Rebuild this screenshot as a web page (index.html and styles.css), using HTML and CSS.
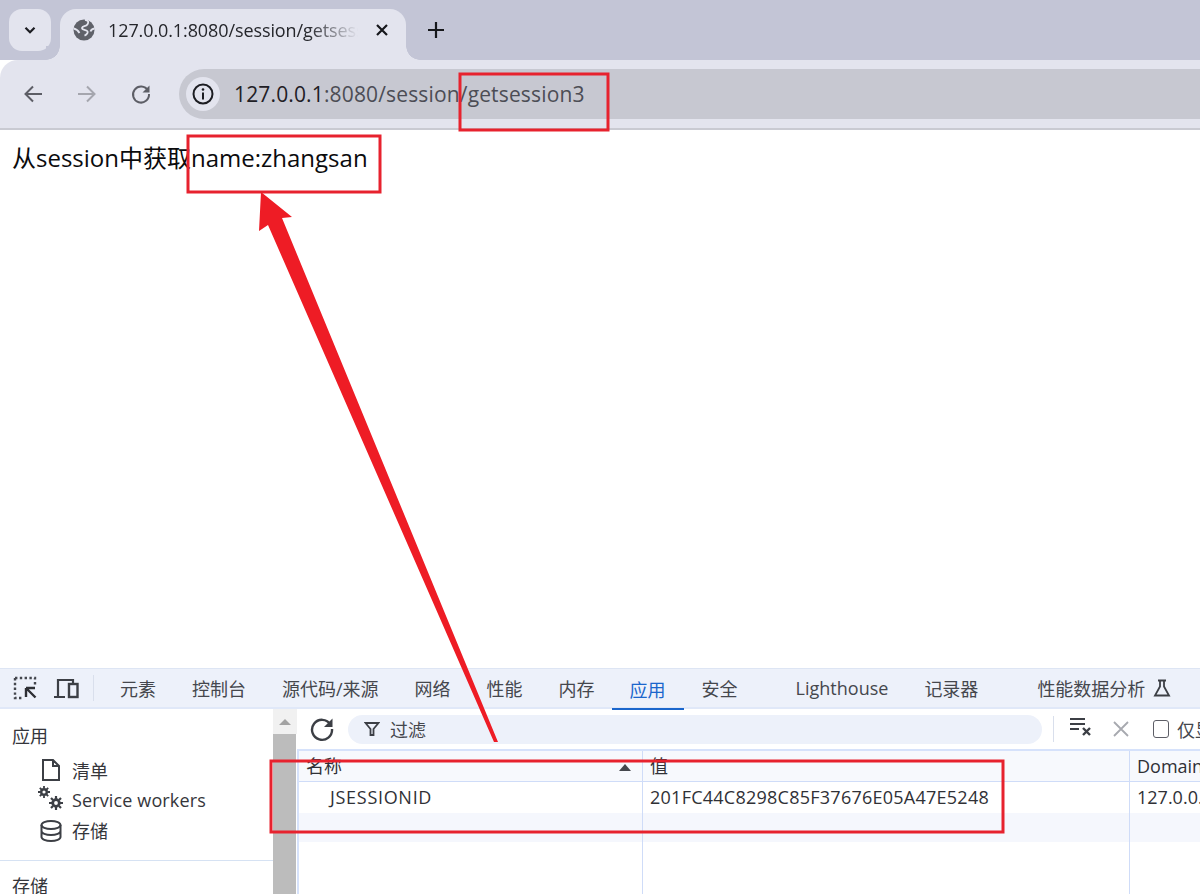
FILE: index.html
```html
<!DOCTYPE html>
<html lang="zh-CN">
<head>
<meta charset="utf-8">
<title>getsession3</title>
<link rel="stylesheet" href="styles.css">
</head>
<body>
<div class="window">
  <header class="tabstrip">
    <div class="tabsearch">
      <svg class="ic" width="16" height="16" viewBox="0 0 16 16"><path d="M3.500 5.800 8 10.200l4.500-4.400" fill="none" stroke="#1c1d22" stroke-width="2.200"/></svg>
    </div>
    <div class="tab">
      <svg class="globe" width="22" height="22" viewBox="0 0 22 22"><circle cx="11" cy="11" r="10.500" fill="#5f6169"/><path d="M12 .8c3.500.5 3.800 2.400 2.400 4.600C12.800 8 9.500 6.500 9 9c-.4 2 3.800 1.500 5.200 3 1.300 1.400-.5 3.800-2.700 4.700M21.500 9.500c-2 .3-3.500 1.500-4 3.100M.8 9.500C3 10 5 11.500 6.500 14" fill="none" stroke="#e3e4ee" stroke-width="1.800"/></svg>
      <span class="tabtitle">127.0.0.1:8080/session/getsession3</span>
      <svg class="tabclose" width="14" height="14" viewBox="0 0 14 14"><path d="M2 2l10 10M12 2 2 12" stroke="#16171b" stroke-width="2.200"/></svg>
    </div>
    <svg class="newtab" width="16" height="16" viewBox="0 0 16 16"><path d="M8 0v16M0 8h16" stroke="#16171b" stroke-width="2.200"/></svg>
  </header>

  <nav class="toolbar">
    <svg class="navic" width="24" height="24" viewBox="0 0 24 24"><path d="M21 12H5M12 4.500 4.500 12l7.500 7.500" fill="none" stroke="#5d5e66" stroke-width="2"/></svg>
    <svg class="navic" width="24" height="24" viewBox="0 0 24 24"><path d="M3 12h16M12 4.500l7.500 7.500-7.500 7.500" fill="none" stroke="#a5a6ae" stroke-width="2"/></svg>
    <svg class="navic" width="24" height="24" viewBox="0 0 24 24"><path d="M18.900 8.500A8 8 0 1 0 20 12" fill="none" stroke="#5d5e66" stroke-width="2"/><path d="M20.500 3.500v7h-7z" fill="#5d5e66"/></svg>
    <div class="omnibox">
      <div class="badge">
        <svg width="24" height="24" viewBox="0 0 24 24"><circle cx="12" cy="12" r="9.500" fill="none" stroke="#1c1d22" stroke-width="2"/><path d="M12 10.500v7" stroke="#1c1d22" stroke-width="2"/><circle cx="12" cy="7.500" r="1.300" fill="#1c1d22"/></svg>
      </div>
      <div class="url"><span class="host">127.0.0.1</span>:8080/session/getsession3</div>
    </div>
  </nav>

  <main class="page">
    <p class="message">从session中获取name:zhangsan</p>
  </main>

  <section class="devtools">
    <div class="dt-tabs">
      <svg class="dt-ic" width="24" height="24" viewBox="0 0 24 24"><path d="M2 2h20v8M2 2v20h8" fill="none" stroke="#44474e" stroke-width="2.400" stroke-dasharray="2.400 2.400"/><path d="M13 12h9M13 12v9M13.500 12.500l9 9" fill="none" stroke="#2e3035" stroke-width="2.400"/></svg>
      <svg class="dt-ic" width="26" height="22" viewBox="0 0 26 22"><path d="M1 20h11M5 20V3h15v3" fill="none" stroke="#3c3f45" stroke-width="2.200"/><rect x="16" y="7" width="8.500" height="13" fill="none" stroke="#3c3f45" stroke-width="2.400"/></svg>
      <span class="dt-sep"></span>
      <span class="dt-tab">元素</span>
      <span class="dt-tab">控制台</span>
      <span class="dt-tab">源代码/来源</span>
      <span class="dt-tab">网络</span>
      <span class="dt-tab">性能</span>
      <span class="dt-tab">内存</span>
      <span class="dt-tab active">应用</span>
      <span class="dt-tab">安全</span>
      <span class="dt-tab wide">Lighthouse</span>
      <span class="dt-tab">记录器</span>
      <span class="dt-tab wide last">性能数据分析
        <svg class="flask" width="18" height="18" viewBox="0 0 18 18"><path d="M5 1.500h8M7 1.500v6L2 16.500h14l-5-9v-6" fill="none" stroke="#3c3f45" stroke-width="1.800"/></svg>
      </span>
    </div>
    <div class="dt-body">
      <aside class="sidebar">
        <div class="side-head">应用</div>
        <div class="side-item">
          <svg class="side-ic" width="24" height="24" viewBox="0 0 24 24"><path d="M4 2h10l6 6v14H4zM14 2v6h6" fill="none" stroke="#3c3f45" stroke-width="2"/></svg>
          <span>清单</span>
        </div>
        <div class="side-item">
          <svg class="side-ic" width="26" height="26" viewBox="0 0 26 26"><g fill="none" stroke="#3c3f45"><circle cx="6" cy="6" r="2.800" stroke-width="2.400"/><path d="M6 0v2.500M6 9.500V12M0 6h2.500M9.500 6H12M1.800 1.800l1.800 1.800M8.400 8.400l1.800 1.800M1.800 10.200l1.800-1.800M8.400 3.600l1.800-1.800" stroke-width="1.800"/><circle cx="18" cy="17" r="3.300" stroke-width="2.800"/><path d="M18 10v3M18 21v3M11 17h3M22 17h3M13 12l2 2M21 20l2 2M13 22l2-2M21 14l2-2" stroke-width="2.200"/></g></svg>
          <span class="sw">Service workers</span>
        </div>
        <div class="side-item">
          <svg class="side-ic" width="24" height="24" viewBox="0 0 24 24"><g fill="none" stroke="#3c3f45" stroke-width="2"><ellipse cx="12" cy="6" rx="9.500" ry="4"/><path d="M2.500 6v12c0 2.200 4.300 4 9.500 4s9.500-1.800 9.500-4V6M2.500 12c0 2.200 4.300 4 9.500 4s9.500-1.800 9.500-4"/></g></svg>
          <span>存储</span>
        </div>
        <div class="side-divider"></div>
        <div class="side-head">存储</div>
      </aside>
      <div class="scrollbar">
        <div class="sb-btn"><span class="sb-arrow"></span></div>
        <div class="sb-thumb"></div>
      </div>
      <div class="panel">
        <div class="panel-bar">
          <svg class="bar-reload" width="26" height="26" viewBox="0 0 26 26"><path d="M21.500 8.500A10 10 0 1 0 23 13" fill="none" stroke="#3c3f45" stroke-width="2.400"/><path d="M23.500 2.500v8.500H15z" fill="#3c3f45"/></svg>
          <div class="filter">
            <svg width="16" height="16" viewBox="0 0 16 16"><path d="M1.500 2h13L9.500 8v6h-3V8z" fill="none" stroke="#3c3f45" stroke-width="1.800"/></svg>
            <span>过滤</span>
          </div>
          <span class="bar-sep"></span>
          <svg class="bar-clear" width="22" height="20" viewBox="0 0 22 20"><path d="M0 2h15M0 7h15M0 12h9" stroke="#3c3f45" stroke-width="2"/><path d="M13 11l7 7M20 11l-7 7" stroke="#3c3f45" stroke-width="2.400"/></svg>
          <svg class="bar-x" width="16" height="16" viewBox="0 0 16 16"><path d="M1 1l14 14M15 1 1 15" stroke="#a7a9af" stroke-width="1.800"/></svg>
          <span class="check"></span>
          <span class="only">仅显示</span>
        </div>
        <div class="table">
          <div class="row head">
            <div class="cell c1">名称<span class="sort"></span></div>
            <div class="cell c2">值</div>
            <div class="cell c3">Domain</div>
          </div>
          <div class="row data">
            <div class="cell c1 indent">JSESSIONID</div>
            <div class="cell c2">201FC44C8298C85F37676E05A47E5248</div>
            <div class="cell c3">127.0.0.1</div>
          </div>
          <div class="row stripe">
            <div class="cell c1"></div>
            <div class="cell c2"></div>
            <div class="cell c3"></div>
          </div>
          <div class="row filler">
            <div class="cell c1"></div>
            <div class="cell c2"></div>
            <div class="cell c3"></div>
          </div>
        </div>
      </div>
    </div>
  </section>

  <svg class="annotations" width="1200" height="894" viewBox="0 0 1200 894">
    <g class="note-box">
      <rect x="460" y="74" width="148" height="56"/>
      <rect x="188" y="136" width="192" height="56"/>
      <rect x="271" y="761" width="732" height="71"/>
    </g>
    <polygon class="note-arrow" points="261,192 292,217 282,218 498,742 494,742 268,225 259,231"/>
  </svg>
</div>
</body>
</html>
```

FILE: styles.css
```css
* { box-sizing: border-box; }
html, body { margin: 0; padding: 0; background: #fff; }
body { font-family: "Open Sans", "Noto Sans CJK SC", sans-serif; color: #303136; }
svg { display: block; flex: none; }

.window {
  position: relative;
  width: 1200px;
  height: 894px;
  overflow: hidden;
  display: flex;
  flex-direction: column;
}

/* Tab strip */
.tabstrip {
  height: 60px;
  background: #c3c5d6;
  display: flex;
  align-items: flex-start;
  padding: 9px 0 0 9px;
  flex: none;
}
.tabsearch {
  width: 42px;
  height: 42px;
  border-radius: 13px;
  background: #e3e4ee;
  display: flex;
  align-items: center;
  justify-content: center;
}
.tab {
  position: relative;
  width: 346px;
  height: 51px;
  margin-left: 9px;
  background: #e3e4ee;
  border-radius: 16px 16px 0 0;
  display: flex;
  align-items: center;
  padding: 0 0 9px 13px;
}
.tab::before, .tab::after {
  content: "";
  position: absolute;
  bottom: 0;
  width: 14px;
  height: 14px;
}
.tab::before { left: -14px; background: radial-gradient(circle at 0 0, #c3c5d6 13.500px, #e3e4ee 14px); }
.tab::after { right: -14px; background: radial-gradient(circle at 100% 0, #c3c5d6 13.500px, #e3e4ee 14px); }
.tabtitle {
  width: 250px;
  margin-left: 13px;
  white-space: nowrap;
  overflow: hidden;
  font-size: 18px;
  line-height: 24px;
  letter-spacing: -0.1px;
  color: #25262b;
  -webkit-mask-image: linear-gradient(90deg, #000 80%, transparent 100%);
  mask-image: linear-gradient(90deg, #000 80%, transparent 100%);
}
.tabclose { margin-left: 17px; }
.newtab { margin: 13px 0 0 22px; }

/* Toolbar */
.toolbar {
  height: 70px;
  flex: none;
  background: linear-gradient(#e3e4ee, #e3e4ee) top / 100% 68px no-repeat, #c9cad2;
  display: flex;
  align-items: flex-start;
  padding: 9px 0 0 21px;
  position: relative;
  border-top-left-radius: 18px;
}
.navic { margin: 13px 30px 0 0; }
.navic:nth-child(3) { margin-right: 27px; }
.omnibox {
  flex: 1;
  height: 50px;
  margin-left: -1px;
  background: #c7c8d1;
  border-radius: 25px 0 0 25px;
  display: flex;
  align-items: center;
  padding-left: 7px;
}
.badge {
  width: 34px;
  height: 34px;
  border-radius: 50%;
  background: #e3e4ee;
  display: flex;
  align-items: center;
  justify-content: center;
}
.url {
  margin-left: 14px;
  font-size: 21px;
  line-height: 28px;
  letter-spacing: 0.15px;
  color: #4c4d55;
  white-space: nowrap;
}
.host { color: #1f2025; }

/* Rendered page */
.page { flex: 1; background: #fff; min-height: 0; }
.message {
  margin: 0;
  padding: 12px 0 0 12px;
  font-size: 24px;
  line-height: 32px;
  color: #0b0b0d;
  white-space: nowrap;
}

/* DevTools */
.devtools { height: 226px; flex: none; display: flex; flex-direction: column; }
.dt-tabs {
  height: 41px;
  flex: none;
  background: #edf1fa;
  border-top: 1px solid #dde5f4;
  border-bottom: 2px solid #e0e8f8;
  display: flex;
  align-items: center;
  padding-left: 13px;
  font-size: 18px;
  color: #45474d;
}
.dt-ic { margin-right: 17px; }
.dt-ic + .dt-ic { margin-right: 14px; margin-left: -1px; }
.dt-sep { width: 1px; height: 26px; background: #d9dfec; }
.dt-tab {
  height: 39px;
  padding: 0 18px;
  display: flex;
  align-items: center;
  white-space: nowrap;
  flex: none;
}
.dt-sep + .dt-tab { margin-left: 8px; }
.dt-tab.wide { margin-left: 22px; }
.dt-tab.last { margin-left: 23px; }
.dt-tab.active {
  color: #1a66cc;
  box-shadow: inset 0 -2px 0 #1a66cc;
  margin-bottom: -2px;
  margin-left: -1px;
  height: 41px;
}
.flask { margin-left: 8px; }

.dt-body { flex: 1; display: flex; min-height: 0; }
.sidebar { width: 273px; flex: none; padding-top: 12px; font-size: 18px; color: #35363b; }
.side-head { height: 30px; padding-left: 12px; line-height: 30px; }
.side-head:first-child { height: 34px; }
.side-item {
  position: relative;
  height: 30px;
  padding-left: 72px;
  display: flex;
  align-items: center;
  white-space: nowrap;
}
.sw { letter-spacing: 0.13px; }
.side-ic { position: absolute; left: 39px; top: 3px; }
.side-item:nth-child(3) .side-ic { top: 1px; left: 38px; }
.side-item:nth-child(4) .side-ic { top: 4px; left: 39px; }
.side-divider { height: 1px; margin: 15px 0 10px; background: #d6e2f3; }

.scrollbar { width: 24px; flex: none; display: flex; flex-direction: column; }
.sb-btn {
  height: 25px;
  background: #f1f1f1;
  display: flex;
  justify-content: center;
  padding-top: 10px;
}
.sb-arrow {
  width: 0;
  height: 0;
  border-left: 6px solid transparent;
  border-right: 6px solid transparent;
  border-bottom: 6px solid #a3a3a3;
}
.sb-thumb { flex: 1; background: #bcbcbc; margin-right: 1px; }

.panel { flex: 1; min-width: 0; display: flex; flex-direction: column; }
.panel-bar {
  height: 40px;
  flex: none;
  display: flex;
  align-items: center;
  padding-left: 12px;
  white-space: nowrap;
  font-size: 18px;
  color: #45474d;
}
.filter {
  width: 694px;
  height: 29px;
  margin-left: 13px;
  border-radius: 15px;
  background: #edf1fa;
  display: flex;
  align-items: center;
  gap: 10px;
  padding-left: 16px;
  flex: none;
}
.bar-sep { width: 1px; height: 26px; margin-left: 11px; background: #d9dfec; flex: none; }
.bar-clear { margin: -4px 0 0 16px; }
.bar-x { margin-left: 21px; }
.check {
  width: 16px;
  height: 18px;
  margin-left: 24px;
  border: 1.500px solid #5d5e66;
  border-radius: 3px;
  flex: none;
}
.only { margin-left: 8px; }

.table {
  flex: 1;
  min-height: 0;
  display: flex;
  flex-direction: column;
  border-top: 2px solid #d6e2fb;
  border-left: 2px solid #d6e2fb;
  font-size: 18px;
  color: #303136;
}
.row { display: flex; flex: none; height: 31px; }
.row.head { height: 31px; background: #f7f9fd; border-bottom: 1px solid #cfdcf8; }
.row.stripe { height: 29px; background: #f5f7fd; }
.row.filler { flex: 1; }
.cell {
  padding-left: 7px;
  line-height: 30px;
  white-space: nowrap;
  overflow: hidden;
  position: relative;
  border-right: 1px solid #cfdcf8;
  flex: none;
}
.c1 { width: 344px; }
.c2 { width: 487px; }
.c3 { flex: 1; border-right: 0; }
.data .c2 { letter-spacing: 0.25px; }
.indent { padding-left: 31px; letter-spacing: 0.7px; }
.sort {
  position: absolute;
  right: 11px;
  top: 13px;
  border-left: 6px solid transparent;
  border-right: 6px solid transparent;
  border-bottom: 7px solid #45474d;
}

/* Red review annotations drawn over the screenshot */
.annotations { position: absolute; left: 0; top: 0; pointer-events: none; }
.note-box rect { fill: none; stroke: #e7222e; stroke-width: 3; }
.note-arrow { fill: #ee1c25; }
```
